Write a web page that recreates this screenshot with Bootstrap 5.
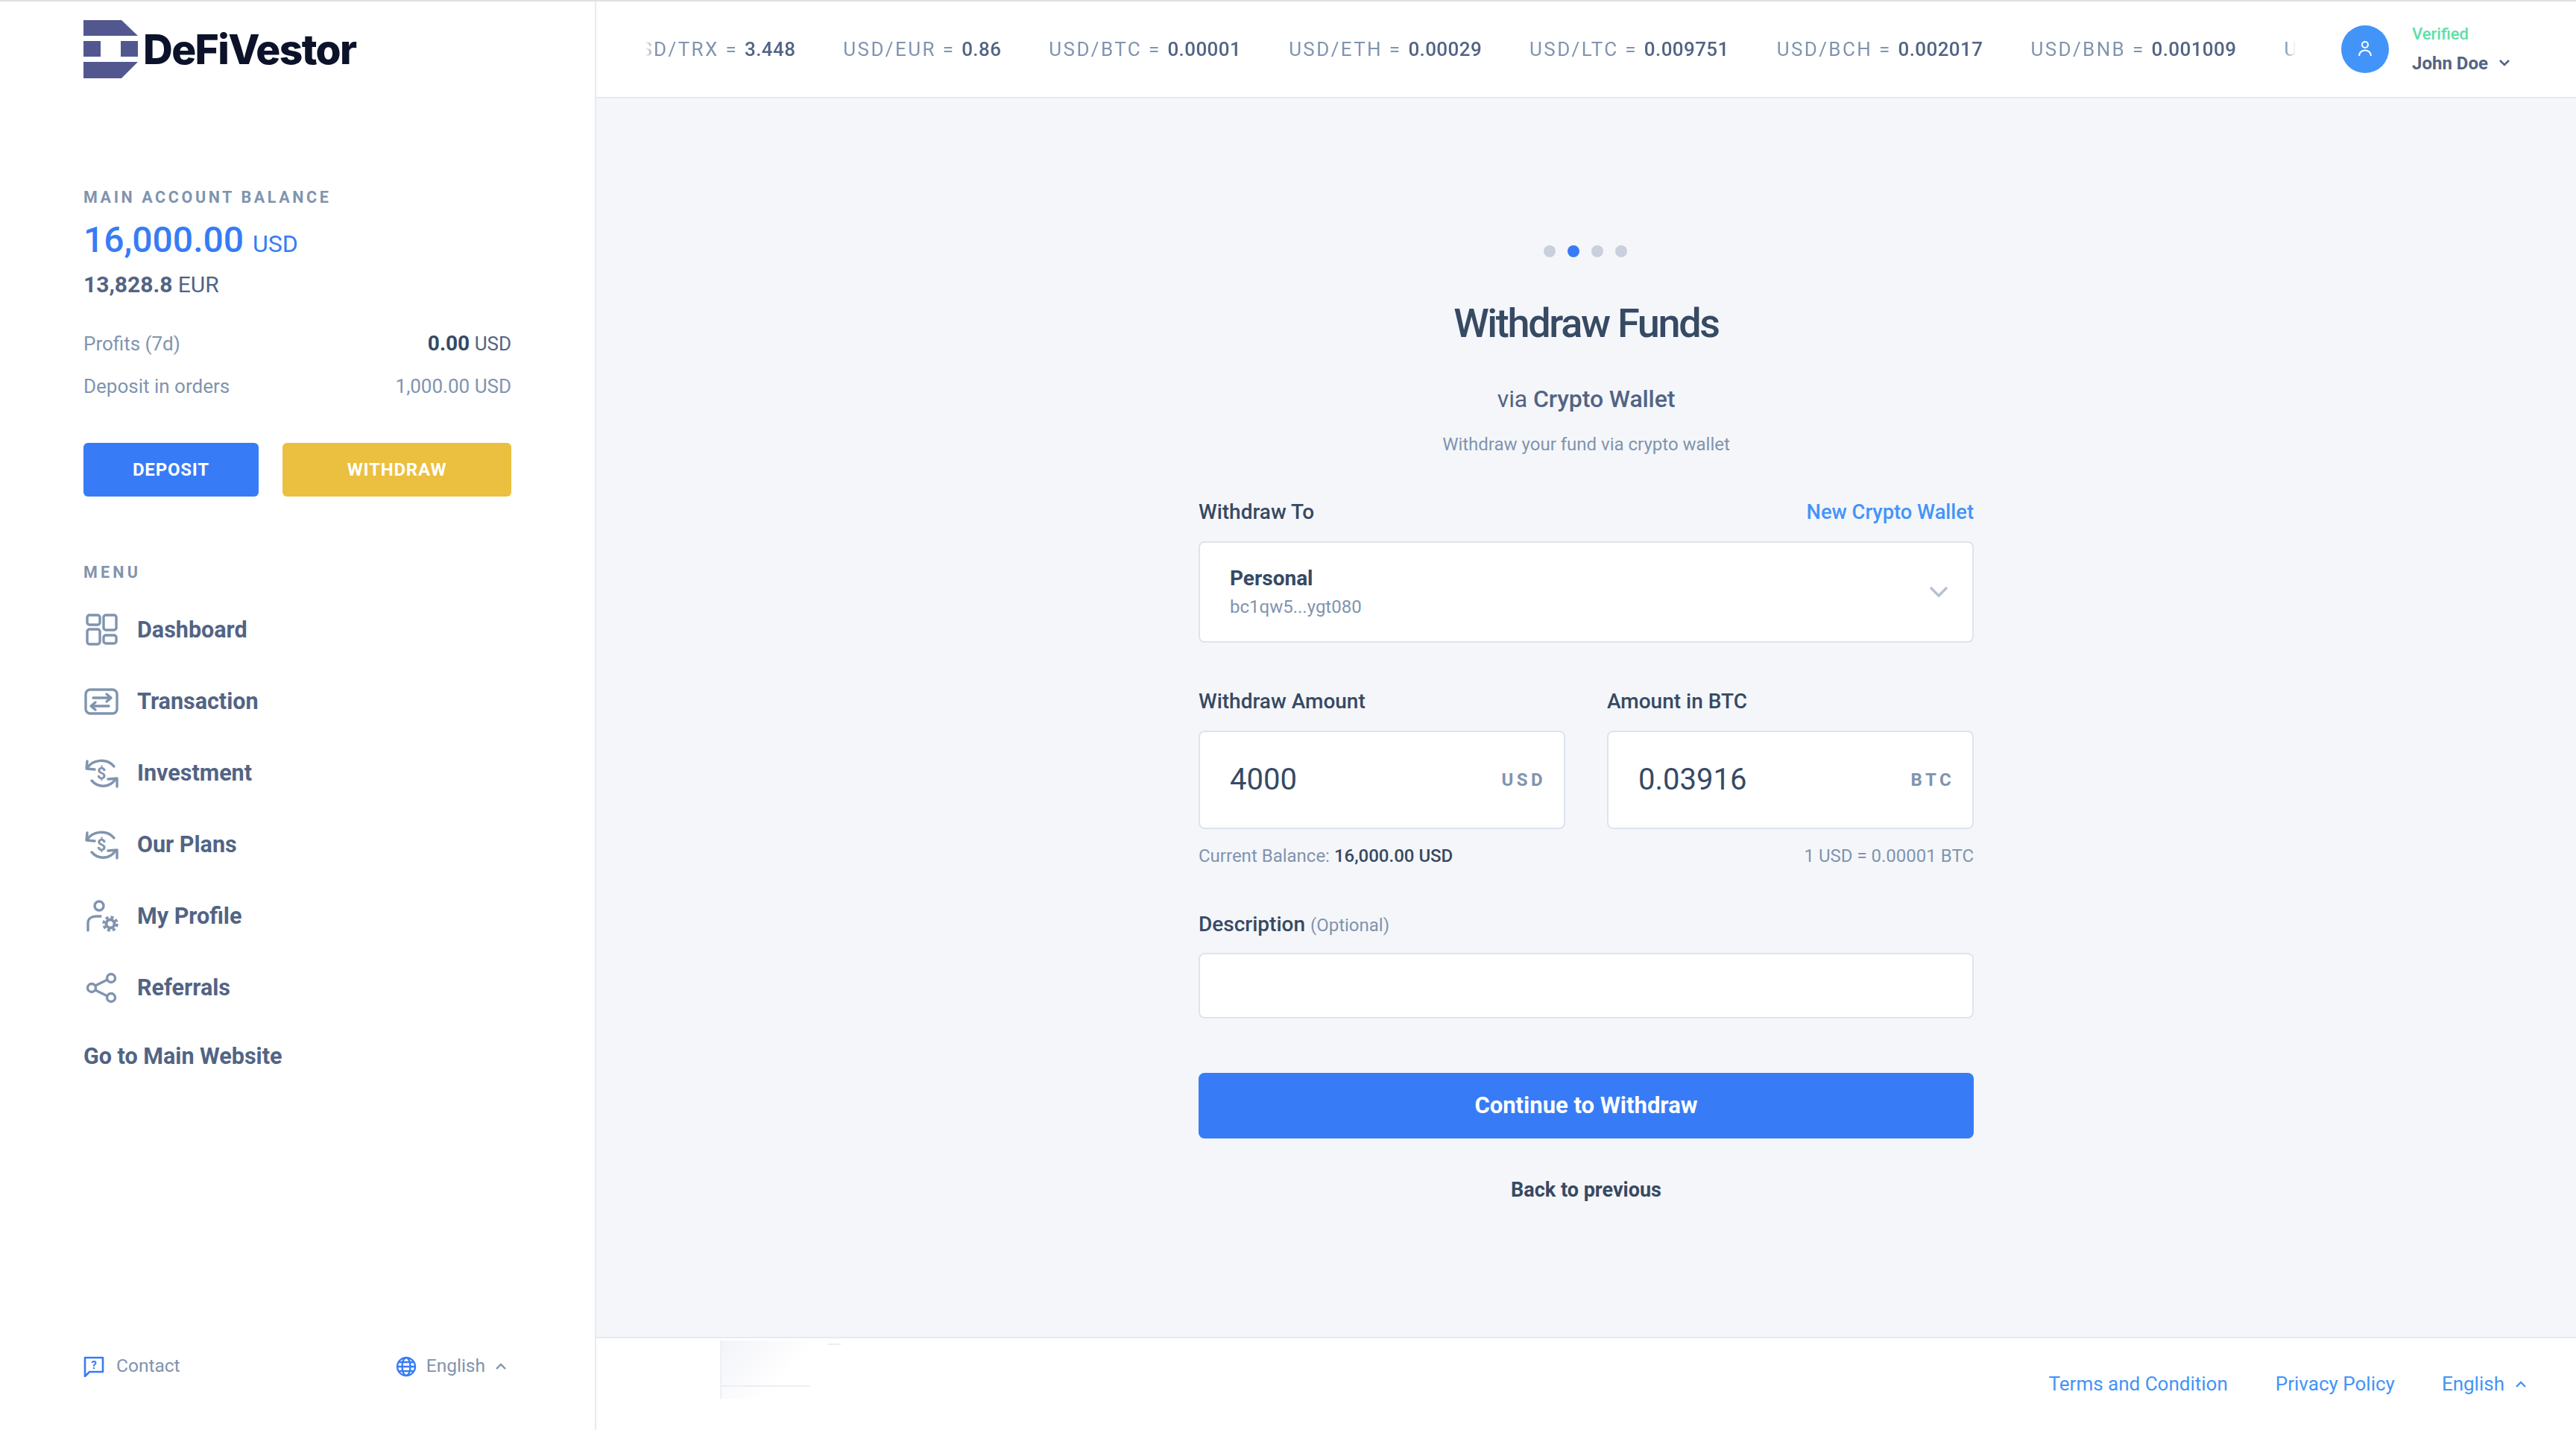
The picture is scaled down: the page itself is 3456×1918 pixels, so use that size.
<!DOCTYPE html>
<html lang="en">
<head>
<meta charset="utf-8">
<title>DeFiVestor - Withdraw Funds</title>
<link href="https://cdn.jsdelivr.net/npm/bootstrap@5.3.0/dist/css/bootstrap.min.css" rel="stylesheet">
<style>
html,body{height:100%}
body{font-family:Roboto,"Liberation Sans",sans-serif;background:#f5f6fa;color:#526484;overflow:hidden;border-top:2px solid #e0e0e0}
a{text-decoration:none}
.app-shell{height:1916px}
.side-panel{width:800px;flex:none;background:#fff;border-right:2px solid #e8ebf3;padding:24px 112px 0 112px}
.brand-row{height:80px;gap:7px}
.brand-name{font-family:Inter,Roboto,sans-serif;font-weight:800;font-size:55px;letter-spacing:-1.6px;color:#0b1229;line-height:1}
.over-label{font-size:21.5px;font-weight:700;letter-spacing:3.6px;color:#8094ae;line-height:28px}
.bal-block{margin-top:145px}
.bal-main{font-size:48px;font-weight:500;color:#377cf6;line-height:60px;margin-top:13px}
.bal-main span{font-size:32px;font-weight:400;margin-left:0}
.bal-sub{font-size:30px;color:#526484;line-height:40px;margin-top:5px}
.bal-row{font-size:26px;color:#8094ae;line-height:32px}
.bal-gap-a{margin-top:43px}
.bal-gap-b{margin-top:25px}
.bal-row b{font-weight:700;color:#364a63;font-size:28px}
.bal-row i{font-style:normal;color:#526484}
.act-row{margin-top:60px}
.act-btn{height:72px;font-size:24px;font-weight:700;color:#fff;border:0;border-radius:6px;letter-spacing:.8px;display:flex;align-items:center;justify-content:center}
.act-blue{background:#377cf6;width:235px}
.act-gold{background:#ebbf3f;width:307px}
.act-blue:hover{background:#377cf6;color:#fff}.act-gold:hover{background:#ebbf3f;color:#fff}
.menu-head{margin-top:88px;letter-spacing:4.2px}
.menu-list{margin-top:15px}
.menu-item{height:96px;display:flex;align-items:center;gap:24px;font-size:30.5px;font-weight:700;color:#526484}
.menu-item svg{flex:none;width:48px;height:48px;fill:none;stroke:#8094ae;stroke-width:3.4;stroke-linecap:round;stroke-linejoin:round}
.menu-item text{fill:#8094ae;stroke:none;font:700 22px Roboto,sans-serif}
.menu-solo{font-size:30.5px;font-weight:700;color:#526484;line-height:40px;margin-top:24px}
.side-foot{font-size:24.5px;color:#8094ae;padding-bottom:67px}
.foot-a{color:#8094ae}
.foot-b{color:#8094ae;gap:13px;margin-right:6px}
.top-bar{height:128px;background:#fff;border-bottom:2px solid #e5e9f2;flex:none;box-sizing:content-box}
.tick-strip{margin-left:66px;width:2214px;overflow:hidden;white-space:nowrap;-webkit-mask-image:linear-gradient(90deg,transparent 0,#000 10px,#000 2200px,transparent 2214px);mask-image:linear-gradient(90deg,transparent 0,#000 10px,#000 2200px,transparent 2214px)}
.tick-run{gap:64px;margin-left:-26px;font-size:26px;letter-spacing:2.39px;color:#8094ae}
.tick-run b{font-weight:500;color:#526484;letter-spacing:.4px}
.user-wrap{margin-left:61px;gap:31px}
.avatar-dot{width:64px;height:64px;border-radius:50%;background:#4394f8;flex:none}
.user-name{font-size:24px;font-weight:700;color:#526484;line-height:32px;margin-top:9px;gap:14px}
.user-state{font-size:22px;font-weight:500;color:#5ce0a5;line-height:28px}
.main-flow{flex:1;min-height:0}
.form-col{width:1040px;padding-top:197px;margin-left:808px}
.step-row{gap:16px;margin-left:-2px}
.step-dot{width:16px;height:16px;border-radius:50%;background:#c9cfdc}
.step-on{background:#377cf6}
.form-title{font-size:54px;font-weight:500;color:#364a63;letter-spacing:-2.3px;line-height:64px;margin:57px 0 0}
.form-via{font-size:32px;line-height:40px;margin-top:49px;color:#526484;letter-spacing:-.1px}
.form-via b{font-weight:500}
.form-sub{font-size:24px;line-height:32px;color:#8094ae;margin-top:25px}
.label-row{margin-top:55px}
.fld-label{font-size:28px;font-weight:500;color:#364a63;line-height:36px}
.fld-label small{font-size:24px;font-weight:400;color:#8094ae}
.fld-link{font-size:27.3px;font-weight:500;color:#4394f8}
.pick-box{height:136px;background:#fff;border:2px solid #dfe3ee;border-radius:8px;padding:0 32px 0 40px;margin-top:18px}
.pick-name{font-size:28px;font-weight:700;color:#364a63;line-height:36px}
.pick-addr{font-size:24px;color:#8094ae;line-height:32px;margin-top:4px}
.amt-row{margin-top:61px}
.amt-col{width:492px}
.amt-wrap{margin-top:21px}
.amt-input{height:132px;border:2px solid #dfe3ee;border-radius:8px;font-size:40px;color:#364a63;padding:0 100px 0 40px;background:#fff}
.amt-unit{position:absolute;right:26px;top:50%;transform:translateY(-50%);font-size:24px;font-weight:700;letter-spacing:4.4px;color:#8094ae}
.note-line{font-size:24px;line-height:32px;color:#8094ae;margin-top:20px}
.note-line b{font-weight:500;color:#364a63}
.desc-label{margin-top:58px}
.text-input{height:88px;border:2px solid #dfe3ee;border-radius:8px;background:#fff;margin-top:19px}
.go-btn{height:88px;background:#377cf6;color:#fff;font-size:31px;font-weight:700;border:0;border-radius:8px;margin-top:73px}
.go-btn:hover{background:#377cf6;color:#fff}
.back-link{font-size:27px;font-weight:700;color:#364a63;line-height:32px;margin-top:53px}
.page-foot{height:125px;background:#fff;border-top:2px solid #e5e9f2;flex:none;padding:0 66px 0 0;font-size:26px;position:relative}
.page-foot a{color:#4394f8}
.foot-gap{margin-left:64px}
.foot-lang{margin-left:63px;gap:14px}
.ghost-menu{position:absolute;left:166px;top:3px;width:120px;height:78px;border-left:2px solid #eff0f5;background:linear-gradient(135deg,#f3f4f9 0,#fff 70%)}
.ghost-rule{position:absolute;left:166px;top:63px;width:120px;height:2px;background:#eceef4}
.ghost-dash{position:absolute;left:310px;top:7px;width:18px;height:2px;background:#eceef4}
</style>
</head>
<body>
<div class="app-shell d-flex">
  <aside class="side-panel d-flex flex-column">
    <div class="brand-row d-flex align-items-center">
      <svg width="73" height="78" viewBox="0 0 73 78" fill="#52588f" aria-hidden="true"><polygon points="0,0 51,0 73,21 0,21"/><rect x="0" y="28" width="23" height="21"/><rect x="50" y="28" width="23" height="21"/><polygon points="0,56 73,56 51,78 0,78"/></svg>
      <span class="brand-name">DeFiVestor</span>
    </div>
    <div class="bal-block">
      <div class="over-label">MAIN ACCOUNT BALANCE</div>
      <div class="bal-main">16,000.00 <span>USD</span></div>
      <div class="bal-sub"><strong>13,828.8</strong> EUR</div>
      <div class="bal-row bal-gap-a d-flex justify-content-between"><span>Profits (7d)</span><span><b>0.00</b> <i>USD</i></span></div>
      <div class="bal-row bal-gap-b d-flex justify-content-between"><span>Deposit in orders</span><span>1,000.00 USD</span></div>
      <div class="act-row d-flex justify-content-between">
        <a href="#" class="btn act-btn act-blue">DEPOSIT</a>
        <a href="#" class="btn act-btn act-gold">WITHDRAW</a>
      </div>
    </div>
    <div class="over-label menu-head">MENU</div>
    <nav class="menu-list d-flex flex-column">
      <a href="#" class="menu-item"><svg viewBox="0 0 48 48"><rect x="5" y="4" width="17" height="13" rx="3"/><rect x="27" y="4" width="17" height="20" rx="3"/><rect x="5" y="23" width="17" height="20" rx="3"/><rect x="27" y="31" width="17" height="11" rx="3"/></svg>Dashboard</a>
      <a href="#" class="menu-item"><svg viewBox="0 0 48 48"><rect x="3" y="8" width="42" height="32" rx="6"/><path d="M10 30h24M10 30l6-5M10 30l6 5"/><path d="M13 19h24M37 19l-6-5M37 19l-6 5"/></svg>Transaction</a>
      <a href="#" class="menu-item"><svg viewBox="0 0 48 48"><path d="M5 17C12 6 31 3 41 15M11 34c9 10 24 10 32-2"/><path d="M5 8l-1 10 11 1M45 42V31l-12 1"/><text x="24" y="32" text-anchor="middle">$</text></svg>Investment</a>
      <a href="#" class="menu-item"><svg viewBox="0 0 48 48"><path d="M5 17C12 6 31 3 41 15M11 34c9 10 24 10 32-2"/><path d="M5 8l-1 10 11 1M45 42V31l-12 1"/><text x="24" y="32" text-anchor="middle">$</text></svg>Our Plans</a>
      <a href="#" class="menu-item"><svg viewBox="0 0 48 48"><circle cx="21" cy="10" r="6"/><path d="M6 43V33c0-6 5-9 11-9h6"/><circle cx="36" cy="34" r="5.5" stroke-width="4"/><circle cx="36" cy="34" r="9" stroke-width="3.5" stroke-dasharray="4 3.1" stroke-linecap="butt"/></svg>My Profile</a>
      <a href="#" class="menu-item"><svg viewBox="0 0 48 48"><circle cx="11" cy="24" r="5.5"/><circle cx="37" cy="11" r="5.5"/><circle cx="37" cy="37" r="5.5"/><path d="M16 21l16-8M16 27l16 8"/></svg>Referrals</a>
    </nav>
    <a href="#" class="menu-solo">Go to Main Website</a>
    <div class="side-foot d-flex justify-content-between align-items-center mt-auto">
      <a href="#" class="foot-a d-flex align-items-center gap-3">
        <svg width="28" height="28" viewBox="0 0 28 28" fill="none" stroke="#377cf6" stroke-width="2.6" aria-hidden="true"><path d="M2 2h24v19H8l-6 6z" stroke-linejoin="round"/><text x="14" y="17" text-anchor="middle" fill="#377cf6" stroke="none" style="font:700 15px Roboto,sans-serif">?</text></svg>Contact</a>
      <a href="#" class="foot-b d-flex align-items-center">
        <svg width="28" height="28" viewBox="0 0 28 28" fill="none" stroke="#377cf6" stroke-width="2.4" aria-hidden="true"><circle cx="14" cy="14" r="12"/><ellipse cx="14" cy="14" rx="5.5" ry="12"/><path d="M2 14h24M4 8h20M4 20h20"/></svg>English
        <svg width="16" height="12" viewBox="0 0 16 12" fill="none" stroke="#8094ae" stroke-width="2.4" aria-hidden="true"><path d="M2 9l6-6 6 6"/></svg></a>
    </div>
  </aside>
  <div class="d-flex flex-column flex-grow-1" style="min-width:0">
    <header class="top-bar d-flex align-items-center">
      <div class="tick-strip">
        <div class="tick-run d-flex">
          <span>USD/TRX = <b>3.448</b></span>
          <span>USD/EUR = <b>0.86</b></span>
          <span>USD/BTC = <b>0.00001</b></span>
          <span>USD/ETH = <b>0.00029</b></span>
          <span>USD/LTC = <b>0.009751</b></span>
          <span>USD/BCH = <b>0.002017</b></span>
          <span>USD/BNB = <b>0.001009</b></span>
          <span>USD/XRP = <b>1.0</b></span>
        </div>
      </div>
      <div class="user-wrap d-flex align-items-center">
        <div class="avatar-dot d-flex align-items-center justify-content-center">
          <svg width="20" height="24" viewBox="0 0 20 24" fill="none" stroke="#fff" stroke-width="2" aria-hidden="true"><circle cx="10" cy="6" r="4"/><path d="M2 21c0-10 16-10 16 0"/></svg>
        </div>
        <div>
          <div class="user-state">Verified</div>
          <div class="user-name d-flex align-items-center">John Doe <svg width="16" height="11" viewBox="0 0 16 11" fill="none" stroke="#526484" stroke-width="2.6" aria-hidden="true"><path d="M2 2l6 6 6-6"/></svg></div>
        </div>
      </div>
    </header>
    <main class="main-flow">
      <div class="form-col">
        <div class="step-row d-flex justify-content-center">
          <span class="step-dot"></span><span class="step-dot step-on"></span><span class="step-dot"></span><span class="step-dot"></span>
        </div>
        <h1 class="form-title text-center">Withdraw Funds</h1>
        <div class="form-via text-center">via <b>Crypto Wallet</b></div>
        <div class="form-sub text-center">Withdraw your fund via crypto wallet</div>
        <div class="label-row d-flex justify-content-between align-items-center">
          <label class="fld-label">Withdraw To</label>
          <a href="#" class="fld-link">New Crypto Wallet</a>
        </div>
        <div class="pick-box d-flex align-items-center justify-content-between">
          <div>
            <div class="pick-name">Personal</div>
            <div class="pick-addr">bc1qw5...ygt080</div>
          </div>
          <svg width="26" height="16" viewBox="0 0 26 16" fill="none" stroke="#b7c2d0" stroke-width="3.4" aria-hidden="true"><path d="M2 2l11 11L24 2"/></svg>
        </div>
        <div class="amt-row row g-0 justify-content-between">
          <div class="amt-col">
            <label class="fld-label">Withdraw Amount</label>
            <div class="amt-wrap position-relative">
              <input class="form-control amt-input" value="4000" aria-label="Withdraw Amount">
              <span class="amt-unit">USD</span>
            </div>
            <div class="note-line">Current Balance: <b>16,000.00 USD</b></div>
          </div>
          <div class="amt-col">
            <label class="fld-label">Amount in BTC</label>
            <div class="amt-wrap position-relative">
              <input class="form-control amt-input" value="0.03916" aria-label="Amount in BTC">
              <span class="amt-unit">BTC</span>
            </div>
            <div class="note-line text-end">1 USD = 0.00001 BTC</div>
          </div>
        </div>
        <label class="fld-label desc-label d-block">Description <small>(Optional)</small></label>
        <input class="form-control text-input" aria-label="Description">
        <button class="btn go-btn w-100" type="button">Continue to Withdraw</button>
        <div class="text-center back-link">Back to previous</div>
      </div>
    </main>
    <footer class="page-foot d-flex align-items-center justify-content-end">
      <span class="ghost-menu"></span><span class="ghost-rule"></span><span class="ghost-dash"></span>
      <a href="#">Terms and Condition</a>
      <a href="#" class="foot-gap">Privacy Policy</a>
      <a href="#" class="foot-lang d-flex align-items-center">English <svg width="16" height="12" viewBox="0 0 16 12" fill="none" stroke="#4394f8" stroke-width="2.4" aria-hidden="true"><path d="M2 9l6-6 6 6"/></svg></a>
    </footer>
  </div>
</div>
<script src="https://cdn.jsdelivr.net/npm/bootstrap@5.3.0/dist/js/bootstrap.bundle.min.js"></script>
</body>
</html>
